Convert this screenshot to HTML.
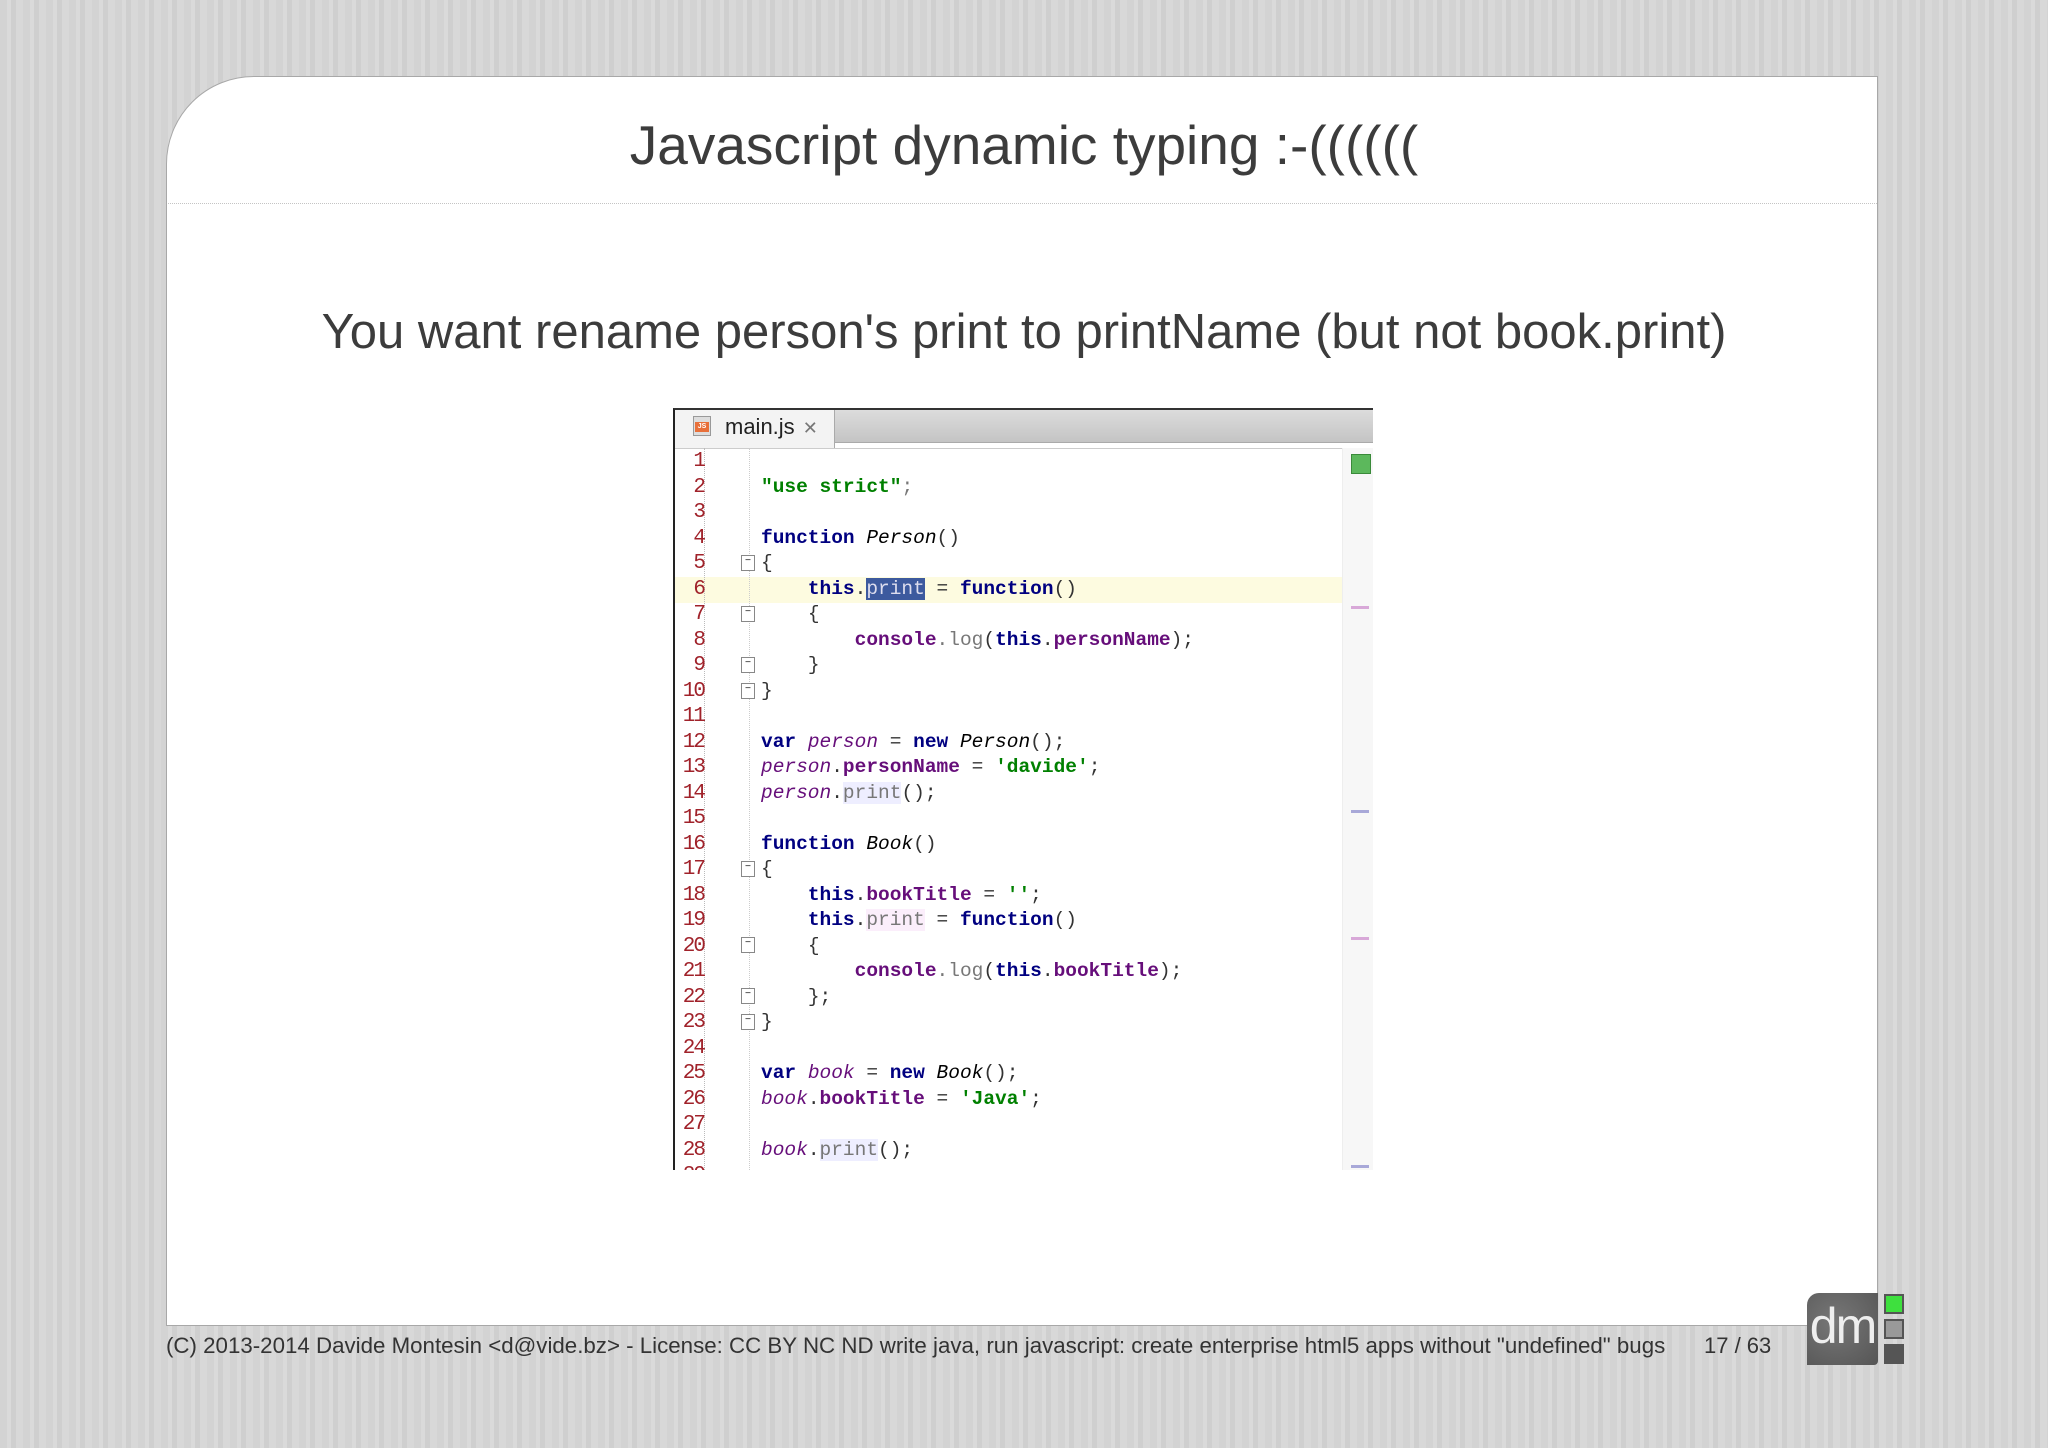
<!DOCTYPE html>
<html><head><meta charset="utf-8"><style>
*{margin:0;padding:0;box-sizing:border-box}
body{width:2048px;height:1448px;overflow:hidden;position:relative;font-family:"Liberation Sans",sans-serif;
background:repeating-linear-gradient(90deg,#d3d3d3 0 7px,#dadada 7px 11px,#cfcfcf 11px 16px,#d8d8d8 16px 23px);}
.card{position:absolute;left:166px;top:76px;width:1712px;height:1250px;background:#fff;border:1.5px solid #a8a8a8;border-top-left-radius:88px}
.title{position:absolute;left:0;width:100%;top:113px;text-align:center;font-size:55px;color:#3c3c3c;line-height:64px}
.hr{position:absolute;left:168px;width:1709px;top:203px;border-top:1.5px dotted #c4c4c4}
.sub{position:absolute;left:0;width:100%;top:304px;text-align:center;font-size:49px;color:#3c3c3c;line-height:56px}
.code{position:absolute;left:673px;top:408px;width:700px;height:762px;background:#fff;overflow:hidden;border-left:2px solid #222;border-top:2px solid #333}
.tabbar{position:absolute;left:0;top:0;width:100%;height:33px;background:linear-gradient(#dcdcdc,#c4c4c4);border-bottom:1px solid #aaa}
.tab{position:absolute;left:0;top:0;width:160px;height:38px;background:#f3f3f3;border-right:1px solid #aaa;font-size:22px;color:#222;padding:4px 0 0 50px}
.tab .ic{position:absolute;left:18px;top:6px;width:18px;height:20px;background:#ddd;border:1px solid #999}
.tab .ic b{position:absolute;left:1px;top:5px;width:14px;height:10px;background:#e8703a;font-size:7px;color:#fff;line-height:10px;text-align:center}
.tab .x{color:#777;font-size:18px;margin-left:8px}
.gut{position:absolute;left:0;top:38px;width:30px;height:730px;border-right:1.5px dotted #bbb}
.fold{position:absolute;left:74px;top:38px;height:730px;border-right:1.5px dotted #ccc}
.rs{position:absolute;left:667px;top:38px;width:33px;height:730px;background:#f7f7f7;border-left:1px solid #eee}
.lines{position:absolute;left:0;top:39px;width:100%;font-family:"Liberation Mono",monospace;font-size:19.5px;line-height:25.5px;font-weight:bold;white-space:pre}
.ln{position:absolute;left:0;width:29px;text-align:right;color:#a0222a;font-weight:normal;font-size:21px;letter-spacing:-2px}
.tx{position:absolute;left:86px;color:#000}
.k{color:#000080}.s{color:#008000}.p{color:#660e7a}.i{font-style:italic;font-weight:normal}.n{font-weight:normal;color:#333}
.g{color:#777;font-weight:normal}
.fm{position:absolute;left:66px;width:14px;height:16px;border:1.5px solid #888;background:#fff;font-size:10px;line-height:12px;text-align:center;color:#666}
.foot{position:absolute;left:166px;top:1333px;font-size:22.3px;color:#333;white-space:nowrap}
.pg{position:absolute;left:1704px;top:1333px;font-size:22px;color:#333}
.logo{position:absolute;left:1807px;top:1293px;width:71px;height:72px;background:radial-gradient(circle at 40% 40%,#777,#555);border-radius:12px 0 4px 0;color:#eee;font-size:50px;line-height:66px;text-align:center;letter-spacing:-2px}
.sq{position:absolute;left:1884px;width:20px;height:20px;border:2px solid #555}
</style></head><body>
<div class="card"></div>
<div class="title">Javascript dynamic typing :-((((((</div>
<div class="hr"></div>
<div class="sub">You want rename person's print to printName (but not book.print)</div>
<div class="code">
<div class="tabbar"></div>
<div class="tab"><span class="ic"><b>JS</b></span>main.js<span class="x">✕</span></div>
<div style="position:absolute;left:0;top:38px;width:100%;height:1px;background:#ccc"></div>
<div style="position:absolute;left:0;top:167px;width:667px;height:25.5px;background:#fdfbe0"></div>
<div class="gut"></div><div class="fold"></div><div class="rs"></div>
<div style="position:absolute;left:676px;top:44px;width:20px;height:20px;background:#5cb85c;border:1px solid #3a8a3a"></div>
<div style="position:absolute;left:676px;top:196px;width:18px;height:3px;background:#d8a8d8"></div>
<div style="position:absolute;left:676px;top:400px;width:18px;height:3px;background:#a8a8d8"></div>
<div style="position:absolute;left:676px;top:527px;width:18px;height:3px;background:#d8a8d8"></div>
<div style="position:absolute;left:676px;top:755px;width:18px;height:3px;background:#a8a8d8"></div>
<div class="lines">
<div class="ln" style="top:0">1
2
3
4
5
6
7
8
9
10
11
12
13
14
15
16
17
18
19
20
21
22
23
24
25
26
27
28
29</div>
<div class="fm" style="top:106px">−</div><div class="fm" style="top:157px">−</div><div class="fm" style="top:208px">−</div><div class="fm" style="top:234px">−</div>
<div class="fm" style="top:412px">−</div><div class="fm" style="top:488px">−</div><div class="fm" style="top:539px">−</div><div class="fm" style="top:565px">−</div>
<div class="tx" style="top:0">
<span class="s">"use strict"</span><span class="g">;</span>

<span class="k">function</span> <span class="i">Person</span><span class="n">()</span>
<span class="n">{</span>
    <span class="k">this</span><span class="n">.</span><span style="background:#3d5a9e;color:#dde;font-weight:normal">print</span> <span class="n">=</span> <span class="k">function</span><span class="n">()</span>
    <span class="n">{</span>
        <span class="p">console</span><span class="g">.log</span><span class="n">(</span><span class="k">this</span><span class="n">.</span><span class="p">personName</span><span class="n">);</span>
    <span class="n">}</span>
<span class="n">}</span>

<span class="k">var</span> <span class="p i">person</span> <span class="n">=</span> <span class="k">new</span> <span class="i">Person</span><span class="n">();</span>
<span class="p i">person</span><span class="n">.</span><span class="p">personName</span> <span class="n">=</span> <span class="s">'davide'</span><span class="n">;</span>
<span class="p i">person</span><span class="n">.</span><span class="g" style="background:#eef">print</span><span class="n">();</span>

<span class="k">function</span> <span class="i">Book</span><span class="n">()</span>
<span class="n">{</span>
    <span class="k">this</span><span class="n">.</span><span class="p">bookTitle</span> <span class="n">=</span> <span class="s">''</span><span class="n">;</span>
    <span class="k">this</span><span class="n">.</span><span class="g" style="background:#fbeefb">print</span> <span class="n">=</span> <span class="k">function</span><span class="n">()</span>
    <span class="n">{</span>
        <span class="p">console</span><span class="g">.log</span><span class="n">(</span><span class="k">this</span><span class="n">.</span><span class="p">bookTitle</span><span class="n">);</span>
    <span class="n">};</span>
<span class="n">}</span>

<span class="k">var</span> <span class="p i">book</span> <span class="n">=</span> <span class="k">new</span> <span class="i">Book</span><span class="n">();</span>
<span class="p i">book</span><span class="n">.</span><span class="p">bookTitle</span> <span class="n">=</span> <span class="s">'Java'</span><span class="n">;</span>

<span class="p i">book</span><span class="n">.</span><span class="g" style="background:#eef">print</span><span class="n">();</span>
</div>
</div>
</div>
<div class="foot">(C) 2013-2014 Davide Montesin &lt;d@vide.bz&gt; - License: CC BY NC ND write java, run javascript: create enterprise html5 apps without "undefined" bugs</div>
<div class="pg">17 / 63</div>
<div class="logo">dm</div>
<div class="sq" style="top:1294px;background:#3ee03e"></div>
<div class="sq" style="top:1319px;background:#999"></div>
<div class="sq" style="top:1344px;background:#555"></div>
</body></html>
